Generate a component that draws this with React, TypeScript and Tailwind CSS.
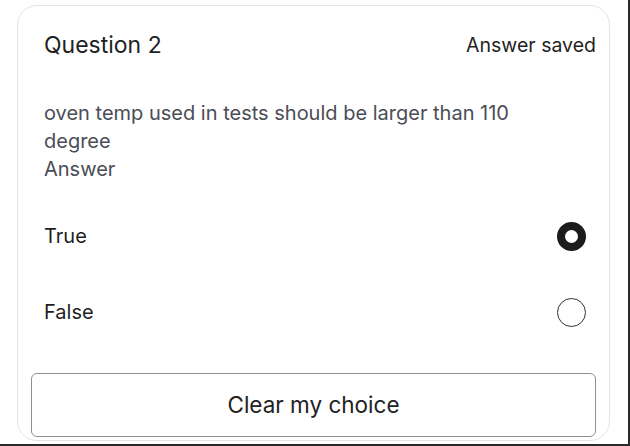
import React from 'react';

const options = [
  { label: 'True', checked: true },
  { label: 'False', checked: false },
];

const App: React.FC = () => {
  return (
    <div
      className="w-[630px] h-[446px] bg-white border-r-2 border-b-2 border-[#2a2a2a] pt-[5px] pl-[17px] overflow-hidden"
      style={{ fontFamily: 'Inter, "Noto Sans", sans-serif' }}
    >
      <div className="w-[593px] h-[436px] border border-[#e3e4e8] rounded-[20px] px-[13px] pt-[25px] flex flex-col">
        {/* Header */}
        <div className="flex justify-between items-center pl-[13px] leading-[28px]">
          <span className="text-[23px] text-[#1f1f1f]">Question 2</span>
          <span className="text-[19.5px] text-[#1f1f1f]">Answer saved</span>
        </div>

        {/* Question text */}
        <div className="pl-[13px] mt-[40px] text-[20px] leading-[28px] text-[#4a4d55] w-[500px]">
          oven temp used in tests should be larger than 110 degree
        </div>
        <div className="pl-[13px] text-[20px] leading-[28px] text-[#4a4d55]">Answer</div>

        {/* Options */}
        <div className="flex flex-col mt-[15px]">
          {options.map((opt) => (
            <div key={opt.label} className="flex items-center justify-between h-[76px] pl-[13px] pr-[10px]">
              <span className="text-[20px] text-[#1f1f1f]">{opt.label}</span>
              {opt.checked ? (
                <span className="w-[29px] h-[29px] rounded-full border-[8px] border-[#1c1c1c] bg-white" />
              ) : (
                <span className="w-[29px] h-[29px] rounded-full border-[1.5px] border-[#333]" />
              )}
            </div>
          ))}
        </div>

        {/* Clear button */}
        <button className="mt-[23px] h-[64px] w-full rounded-[6px] border-[1.5px] border-[#8e9098] text-[22.5px] text-[#222] bg-white">
          Clear my choice
        </button>
      </div>
    </div>
  );
};

export default App;
